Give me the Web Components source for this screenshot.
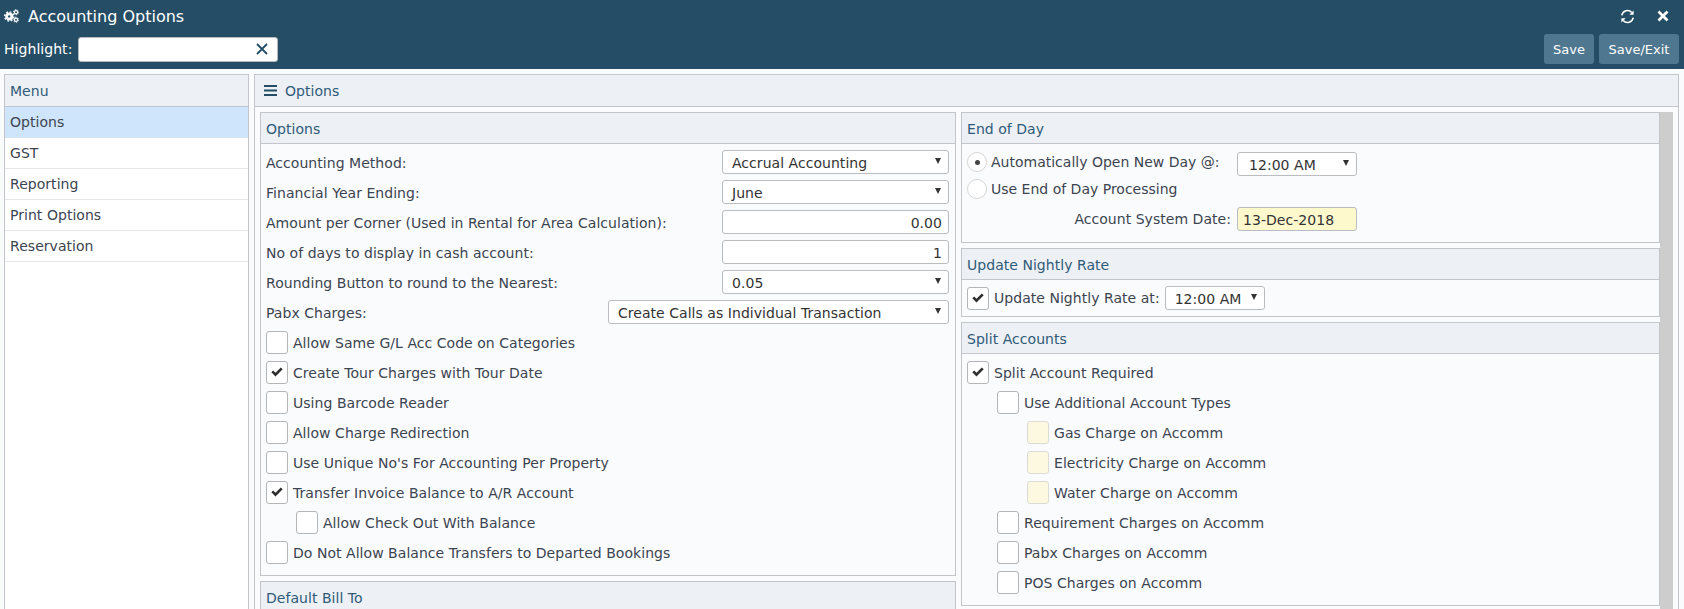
<!DOCTYPE html>
<html>
<head>
<meta charset="utf-8">
<title>Accounting Options</title>
<style>
  html, body { margin: 0; height: 609px; overflow: hidden; background: #fff; }
  body { font: 14px "DejaVu Sans", sans-serif; color: #3c4450; display: block; letter-spacing: .04px; }
</style>
</head>
<body>
<app-header title-text="Accounting Options"></app-header>
<app-body>
  <side-menu slot="menu">
    <menu-item active>Options</menu-item>
    <menu-item>GST</menu-item>
    <menu-item>Reporting</menu-item>
    <menu-item>Print Options</menu-item>
    <menu-item>Reservation</menu-item>
  </side-menu>

  <opt-panel slot="left" heading="Options">
    <field-row label="Accounting Method:"><drop-box value="Accrual Accounting" style="width:227px"></drop-box></field-row>
    <field-row label="Financial Year Ending:"><drop-box value="June" style="width:227px"></drop-box></field-row>
    <field-row label="Amount per Corner (Used in Rental for Area Calculation):"><num-box value="0.00" style="width:227px"></num-box></field-row>
    <field-row label="No of days to display in cash account:"><num-box value="1" style="width:227px"></num-box></field-row>
    <field-row label="Rounding Button to round to the Nearest:"><drop-box value="0.05" style="width:227px"></drop-box></field-row>
    <field-row label="Pabx Charges:"><drop-box value="Create Calls as Individual Transaction" style="width:341px"></drop-box></field-row>
    <tick-row>Allow Same G/L Acc Code on Categories</tick-row>
    <tick-row checked>Create Tour Charges with Tour Date</tick-row>
    <tick-row>Using Barcode Reader</tick-row>
    <tick-row>Allow Charge Redirection</tick-row>
    <tick-row>Use Unique No's For Accounting Per Property</tick-row>
    <tick-row checked>Transfer Invoice Balance to A/R Account</tick-row>
    <tick-row level="1">Allow Check Out With Balance</tick-row>
    <tick-row>Do Not Allow Balance Transfers to Departed Bookings</tick-row>
  </opt-panel>
  <opt-panel slot="left" heading="Default Bill To"></opt-panel>

  <opt-panel slot="right" heading="End of Day" style="height:131px">
    <day-options></day-options>
  </opt-panel>
  <opt-panel slot="right" heading="Update Nightly Rate" style="height:69px">
    <nightly-rate></nightly-rate>
  </opt-panel>
  <opt-panel slot="right" heading="Split Accounts">
    <tick-row checked>Split Account Required</tick-row>
    <tick-row level="1">Use Additional Account Types</tick-row>
    <tick-row level="2" tint>Gas Charge on Accomm</tick-row>
    <tick-row level="2" tint>Electricity Charge on Accomm</tick-row>
    <tick-row level="2" tint>Water Charge on Accomm</tick-row>
    <tick-row level="1">Requirement Charges on Accomm</tick-row>
    <tick-row level="1">Pabx Charges on Accomm</tick-row>
    <tick-row level="1">POS Charges on Accomm</tick-row>
  </opt-panel>
</app-body>

<script>
const CHECK_ICON = `<svg width="12" height="10" viewBox="0 0 12 10"><path d="M0.3 5.3 L2.2 3.4 L4.5 5.7 L9.8 0.4 L11.7 2.3 L4.5 9.5 Z" fill="#2e2e2e"/></svg>`;

class AppHeader extends HTMLElement {
  connectedCallback() {
    let root = this.attachShadow({mode: 'open'});
    root.innerHTML = `
      <style>
        :host { display: block; height: 69px; background: #254e66; color: #fff; box-sizing: border-box; padding: 0 5px 0 4px; letter-spacing: 0; }
        .top { display: flex; align-items: center; height: 32px; }
        .top h1 { margin: 0 0 0 9px; font: 400 16px "DejaVu Sans", sans-serif; flex-grow: 1; }
        .tools { display: flex; align-items: center; gap: 22px; padding-right: 10px; }
        .tools svg { display: block; }
        .bottom { display: flex; align-items: center; height: 32px; margin-top: 1px; }
        label { font-size: 14px; letter-spacing: .05px; margin-right: 6px; }
        .find { width: 200px; height: 25px; box-sizing: border-box; background: #fff; border: 1px solid #b5b9bd; border-radius: 3px; display: flex; align-items: center; justify-content: flex-end; padding-right: 9px; }
        .grow { flex-grow: 1; }
        button { font: 13px "DejaVu Sans", sans-serif; color: #fff; background: #507790; border: 0; border-radius: 3px; height: 30px; padding: 0; margin-left: 5px; }
      </style>
      <div class="top">
        <svg width="15" height="14" viewBox="0 0 15 14">
          <g fill="none" stroke="#fff">
            <circle cx="5.2" cy="7.4" r="2.6" stroke-width="2.8"/>
            <circle cx="5.2" cy="7.4" r="4.6" stroke-width="1.4" stroke-dasharray="1.8 1.8"/>
            <circle cx="12" cy="3.2" r="1.6" stroke-width="1.2"/>
            <circle cx="12" cy="3.2" r="2.6" stroke-width=".9" stroke-dasharray="1.36 1.36"/>
            <circle cx="12" cy="10.8" r="1.6" stroke-width="1.2"/>
            <circle cx="12" cy="10.8" r="2.6" stroke-width=".9" stroke-dasharray="1.36 1.36"/>
          </g>
        </svg>
        <h1>${this.getAttribute('title-text')}</h1>
        <div class="tools">
          <svg width="15" height="15" viewBox="0 0 15 15">
            <path d="M1.8 6.4 A5.8 5.8 0 0 1 11.8 3.4" fill="none" stroke="#fff" stroke-width="1.5"/>
            <path d="M13.6 1.6 V5.8 H9.4 Z" fill="#fff"/>
            <path d="M13.2 8.6 A5.8 5.8 0 0 1 3.2 11.6" fill="none" stroke="#fff" stroke-width="1.5"/>
            <path d="M1.4 13.4 V9.2 H5.6 Z" fill="#fff"/>
          </svg>
          <svg width="12" height="12" viewBox="0 0 12 12"><path d="M1.5 1.5 L10.5 10.5 M10.5 1.5 L1.5 10.5" stroke="#fff" stroke-width="2.8"/></svg>
        </div>
      </div>
      <div class="bottom">
        <label>Highlight:</label>
        <div class="find">
          <svg width="12" height="12" viewBox="0 0 12 12"><path d="M1 1 L11 11 M11 1 L1 11" stroke="#254e66" stroke-width="1.8"/></svg>
        </div>
        <div class="grow"></div>
        <button style="width:50px">Save</button>
        <button style="width:80px">Save/Exit</button>
      </div>
    `;
  }
}
window.customElements.define('app-header', AppHeader);

class AppBody extends HTMLElement {
  connectedCallback() {
    let root = this.attachShadow({mode: 'open'});
    root.innerHTML = `
      <style>
        :host { display: flex; gap: 5px; height: 540px; box-sizing: border-box; padding: 5px 5px 0 4px; background: #fafbfd; }
        .menu-col { width: 245px; flex: none; }
        .main { flex-grow: 1; min-width: 0; border: 1px solid #c2c6ca; border-bottom: 0; box-sizing: border-box; overflow: hidden; }
        .main-head { height: 32px; box-sizing: border-box; background: #edf0f5; border-bottom: 1px solid #c2c6ca; display: flex; align-items: center; gap: 8px; padding-left: 9px; color: #2f5b78; }
        .cols { display: flex; gap: 5px; padding: 5px 5px 0 5px; align-items: flex-start; }
        .col { display: flex; flex-direction: column; gap: 5px; }
        .left { width: 696px; flex: none; }
        .right { width: 699px; flex: none; }
        .bar { width: 13px; height: 500px; margin-left: -5px; background: #cdcdcd; flex: none; }
      </style>
      <div class="menu-col"><slot name="menu"></slot></div>
      <div class="main">
        <div class="main-head">
          <svg width="13" height="11" viewBox="0 0 13 11"><path d="M0 1 H13 M0 5.5 H13 M0 10 H13" stroke="#254e66" stroke-width="2"/></svg>
          <span>Options</span>
        </div>
        <div class="cols">
          <div class="col left"><slot name="left"></slot></div>
          <div class="col right"><slot name="right"></slot></div>
          <div class="bar"></div>
        </div>
      </div>
    `;
  }
}
window.customElements.define('app-body', AppBody);

class SideMenu extends HTMLElement {
  connectedCallback() {
    let root = this.attachShadow({mode: 'open'});
    root.innerHTML = `
      <style>
        :host { display: block; height: 535px; box-sizing: border-box; border: 1px solid #c2c6ca; border-bottom: 0; background: #fff; }
        .head { height: 32px; box-sizing: border-box; background: #edf0f5; border-bottom: 1px solid #c2c6ca; display: flex; align-items: center; padding-left: 5px; color: #2f5b78; }
      </style>
      <div class="head">Menu</div>
      <slot></slot>
    `;
  }
}
window.customElements.define('side-menu', SideMenu);

class MenuItem extends HTMLElement {
  connectedCallback() {
    let root = this.attachShadow({mode: 'open'});
    root.innerHTML = `
      <style>
        :host { display: flex; align-items: center; height: 31px; box-sizing: border-box; padding-left: 5px; border-bottom: 1px solid #e4e6e9; color: #3c4450; }
        :host([active]) { background: #cfe5fb; border-bottom-color: #cfe5fb; }
      </style>
      <slot></slot>
    `;
  }
}
window.customElements.define('menu-item', MenuItem);

class OptPanel extends HTMLElement {
  connectedCallback() {
    let root = this.attachShadow({mode: 'open'});
    root.innerHTML = `
      <style>
        :host { display: block; box-sizing: border-box; border: 1px solid #c2c6ca; background: #fafbfd; }
        .head { height: 31px; box-sizing: border-box; background: #edf0f5; border-bottom: 1px solid #c2c6ca; display: flex; align-items: center; padding: 2px 0 0 5px; color: #2f5b78; }
        .body { padding: 3px 5px 8px 5px; }
      </style>
      <div class="head">${this.getAttribute('heading')}</div>
      <div class="body"><slot></slot></div>
    `;
  }
}
window.customElements.define('opt-panel', OptPanel);

class FieldRow extends HTMLElement {
  connectedCallback() {
    let root = this.attachShadow({mode: 'open'});
    root.innerHTML = `
      <style>
        :host { display: flex; align-items: center; justify-content: space-between; height: 30px; padding-right: 1px; }
        span { padding-top: 2px; }
      </style>
      <span>${this.getAttribute('label')}</span>
      <slot></slot>
    `;
  }
}
window.customElements.define('field-row', FieldRow);

class DropBox extends HTMLElement {
  connectedCallback() {
    let root = this.attachShadow({mode: 'open'});
    root.innerHTML = `
      <style>
        :host { display: flex; align-items: center; justify-content: space-between; height: 24px; box-sizing: border-box; background: #fff; border: 1px solid #b9bcc0; border-radius: 3px; padding: 0 7px 0 9px; color: #333; flex: none; }
        span { padding-top: 1px; }
        i { width: 0; height: 0; border-left: 3px solid transparent; border-right: 3px solid transparent; border-top: 6px solid #333; margin-bottom: 2px; }
      </style>
      <span>${this.getAttribute('value')}</span><i></i>
    `;
  }
}
window.customElements.define('drop-box', DropBox);

class NumBox extends HTMLElement {
  connectedCallback() {
    let root = this.attachShadow({mode: 'open'});
    root.innerHTML = `
      <style>
        :host { display: flex; align-items: center; justify-content: flex-end; height: 24px; box-sizing: border-box; background: var(--box-bg, #fff); border: 1px solid #b9bcc0; border-radius: 3px; padding: 0 6px; color: #333; flex: none; }
        :host([left]) { justify-content: flex-start; padding-left: 5px; }
        span { padding-top: 1px; }
      </style>
      <span>${this.getAttribute('value')}</span>
    `;
  }
}
window.customElements.define('num-box', NumBox);

class TickRow extends HTMLElement {
  connectedCallback() {
    let root = this.attachShadow({mode: 'open'});
    let level = Number(this.getAttribute('level') || 0);
    root.innerHTML = `
      <style>
        :host { display: flex; align-items: center; height: 30px; gap: 5px; }
        .box { width: 22px; height: 23px; flex: none; box-sizing: border-box; background: #fff; border: 1px solid #b3b5b8; border-radius: 3px; display: flex; align-items: center; justify-content: center; }
        :host([tint]) .box { background: #fdf8e0; border-color: #dcdcd6; }
        span { padding-top: 2px; }
      </style>
      <div class="box" style="margin-left:${level * 30}px">${this.hasAttribute('checked') ? CHECK_ICON : ''}</div>
      <span><slot></slot></span>
    `;
  }
}
window.customElements.define('tick-row', TickRow);

class RadioDot extends HTMLElement {
  connectedCallback() {
    let root = this.attachShadow({mode: 'open'});
    root.innerHTML = `
      <style>
        :host { display: flex; align-items: center; justify-content: center; width: 20px; height: 20px; flex: none; box-sizing: border-box; border: 1px solid #d6d6d6; border-radius: 50%; background: #fff; }
        :host([on])::after { content: ""; width: 5px; height: 5px; border-radius: 50%; background: #444; }
      </style>
    `;
  }
}
window.customElements.define('radio-dot', RadioDot);

class DayOptions extends HTMLElement {
  connectedCallback() {
    let root = this.attachShadow({mode: 'open'});
    root.innerHTML = `
      <style>
        :host { display: grid; grid-template-columns: 270px 120px; grid-template-rows: 27px 28px 24px; align-items: start; margin-top: 5px; }
        .opt { display: flex; align-items: center; gap: 4px; }
        .opt span { letter-spacing: 0; }
        .date-label { text-align: right; padding-right: 6px; line-height: 24px; }
        drop-box { width: 120px; padding-left: 11px; }
        num-box { width: 120px; --box-bg: #fdf9cd; }
      </style>
      <div class="opt"><radio-dot on></radio-dot><span>Automatically Open New Day @:</span></div>
      <drop-box value="12:00 AM"></drop-box>
      <div class="opt" style="grid-column:1 / 3"><radio-dot></radio-dot><span>Use End of Day Processing</span></div>
      <div class="date-label">Account System Date:</div>
      <num-box left value="13-Dec-2018"></num-box>
    `;
  }
}
window.customElements.define('day-options', DayOptions);

class NightlyRate extends HTMLElement {
  connectedCallback() {
    let root = this.attachShadow({mode: 'open'});
    root.innerHTML = `
      <style>
        :host { display: flex; align-items: center; gap: 5px; height: 30px; }
        .box { width: 22px; height: 23px; box-sizing: border-box; background: #fff; border: 1px solid #b3b5b8; border-radius: 3px; display: flex; align-items: center; justify-content: center; }
        drop-box { width: 100px; }
      </style>
      <div class="box">${CHECK_ICON}</div>
      <span>Update Nightly Rate at:</span>
      <drop-box value="12:00 AM"></drop-box>
    `;
  }
}
window.customElements.define('nightly-rate', NightlyRate);
</script>
</body>
</html>
